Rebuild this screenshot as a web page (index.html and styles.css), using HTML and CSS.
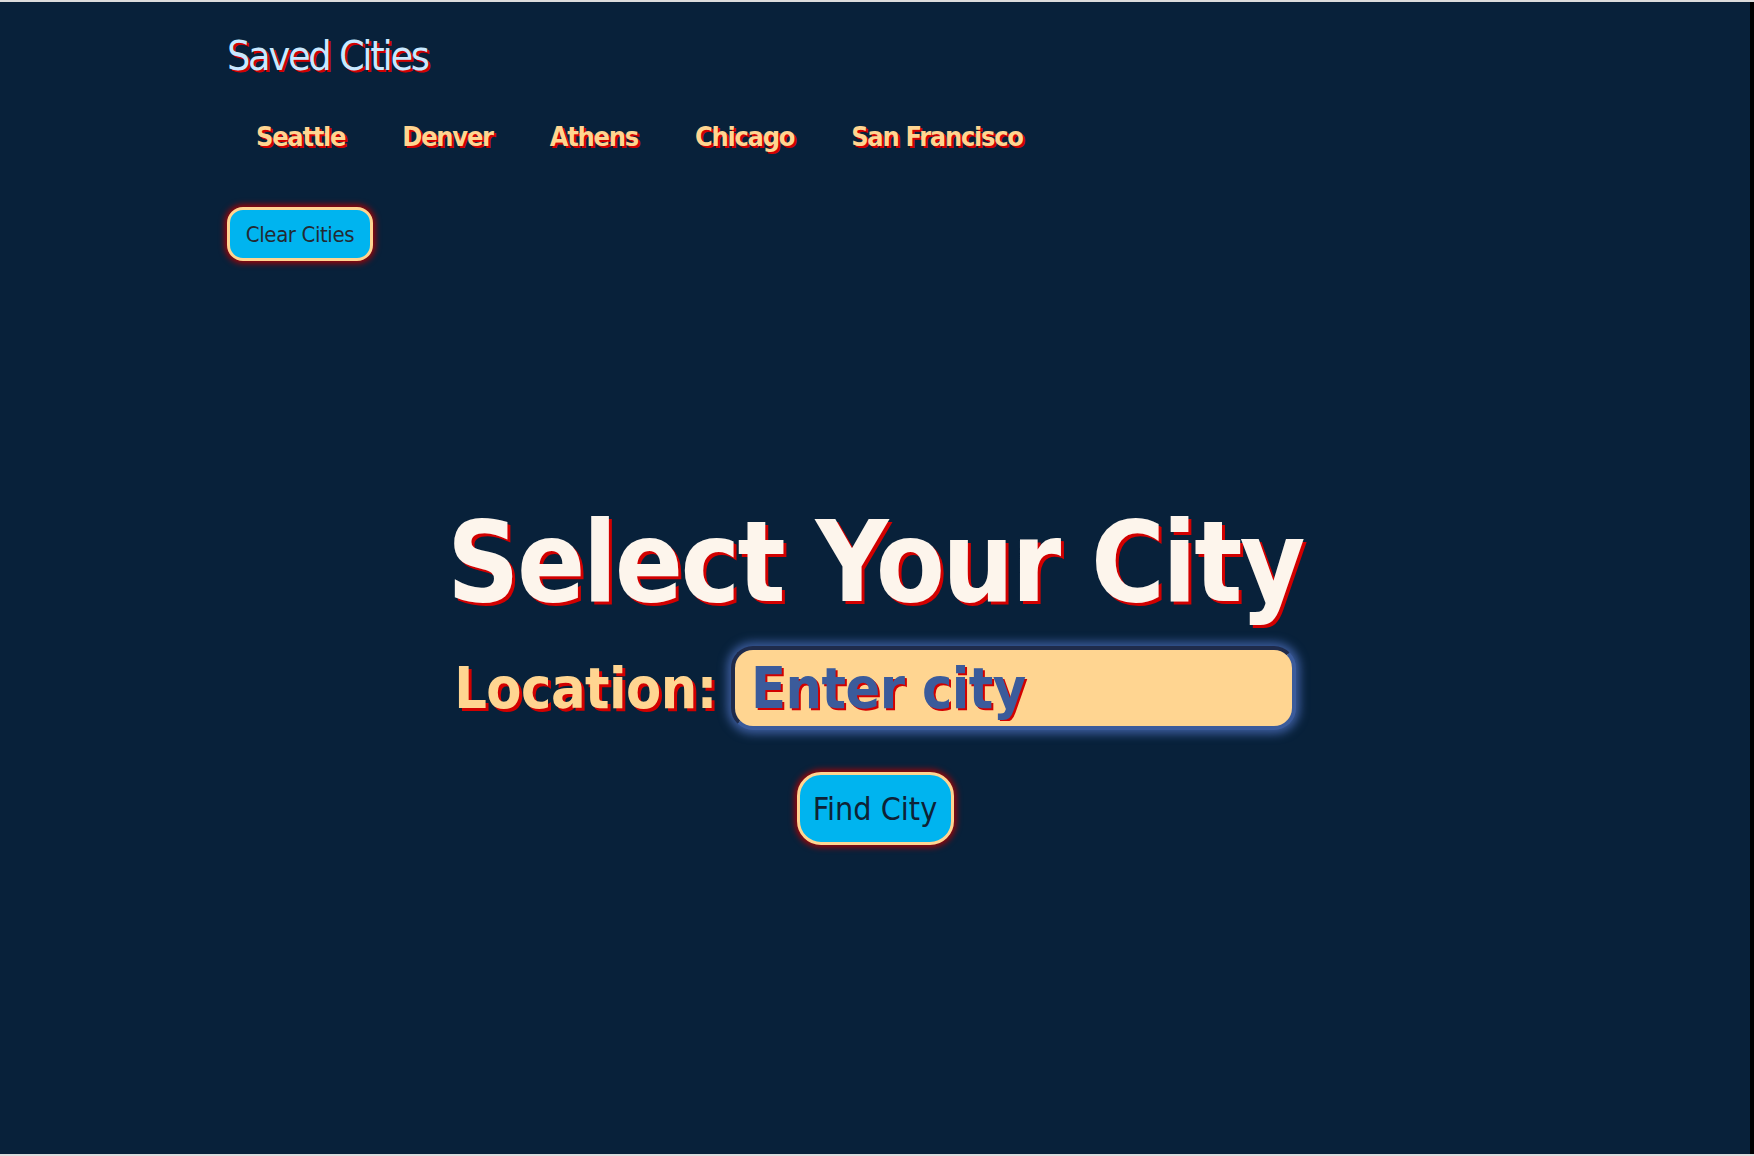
FILE: index.html
```html
<!DOCTYPE html>
<html lang="en">
<head>
<meta charset="utf-8">
<title>Weather - Select Your City</title>
<link rel="stylesheet" href="styles.css">
</head>
<body>
<div class="frame">
  <main class="page">
    <header class="saved">
      <h2 class="saved-title">Saved Cities</h2>
      <ul class="city-list">
        <li class="city">Seattle</li>
        <li class="city">Denver</li>
        <li class="city">Athens</li>
        <li class="city">Chicago</li>
        <li class="city">San Francisco</li>
      </ul>
      <button class="btn clear-btn" type="button">Clear Cities</button>
    </header>
    <section class="search">
      <h1 class="title">Select Your City</h1>
      <form class="search-form">
        <div class="field-row">
          <label class="field-label" for="city">Location:</label>
          <input class="field-input" id="city" type="text" placeholder="Enter city">
        </div>
        <button class="btn find-btn" type="button">Find City</button>
      </form>
    </section>
  </main>
  <div class="edge"></div>
</div>
</body>
</html>
```
FILE: styles.css
```css
* { box-sizing: border-box; }

html, body {
  margin: 0;
  padding: 0;
}

body {
  background: #dcdcdc;
  font-family: "DejaVu Sans Condensed", "DejaVu Sans", sans-serif;
}

.frame {
  display: flex;
  height: 1152px;
  margin: 2px 0;
}

.page {
  flex: 1;
  background: #08213a;
  display: flex;
  flex-direction: column;
}

.edge {
  width: 4px;
  background: #000;
}

.saved {
  padding-left: 227px;
  display: flex;
  flex-direction: column;
  align-items: flex-start;
}

.saved-title {
  margin: 30px 0 0;
  font-size: 41px;
  line-height: 48px;
  font-weight: normal;
  letter-spacing: -2.3px;
  color: #c8e8ff;
  text-shadow: 2px 2px 0 #d20000;
}

.city-list {
  list-style: none;
  margin: 41px 0 0;
  padding: 0 0 0 29px;
  display: flex;
  gap: 57px;
}

.city {
  font-size: 27px;
  line-height: 32px;
  font-weight: bold;
  letter-spacing: -1.3px;
  color: #ffd591;
  text-shadow: 2px 2px 0 #d20000;
}

.btn {
  font-family: inherit;
  cursor: pointer;
  background: #00b4ef;
  border: 3px solid #ffd591;
  box-shadow: 0 0 6px 2px #b00000;
}

.clear-btn {
  margin-top: 54px;
  width: 146px;
  height: 54px;
  border-radius: 16px;
  font-size: 22px;
  letter-spacing: -0.4px;
  color: #232a33;
  padding: 0;
}

.search {
  display: flex;
  flex-direction: column;
  align-items: center;
  margin-top: 236px;
}

.title {
  margin: 0;
  font-size: 112px;
  line-height: 130px;
  font-weight: bold;
  letter-spacing: -2.6px;
  color: #fdf5ec;
  text-shadow: 3px 3px 0 #d20000;
}

.search-form {
  display: flex;
  flex-direction: column;
  align-items: center;
}

.field-row {
  display: flex;
  align-items: center;
  gap: 14px;
  margin-top: 19px;
}

.field-label {
  font-size: 57px;
  font-weight: bold;
  letter-spacing: -0.5px;
  color: #ffd591;
  text-shadow: 3px 3px 0 #d20000;
}

.field-input {
  width: 565px;
  height: 84px;
  border-radius: 22px;
  border: 4px solid;
  border-color: #1f2b4b #3b5b9b #3b5b9b #1f2b4b;
  background: #ffd591;
  box-shadow: 0 0 10px 4px #3b5b9b;
  padding: 0 16px;
  font-family: inherit;
  font-size: 57px;
  font-weight: bold;
  letter-spacing: -0.5px;
  color: #3b5b9b;
  outline: none;
}

.field-input::placeholder {
  color: #3b5b9b;
  opacity: 1;
  text-shadow: 2px 2px 0 #d20000;
}

.find-btn {
  margin-top: 42px;
  width: 157px;
  height: 73px;
  border-radius: 24px;
  font-size: 32px;
  color: #0e2236;
  padding: 0;
}
```
